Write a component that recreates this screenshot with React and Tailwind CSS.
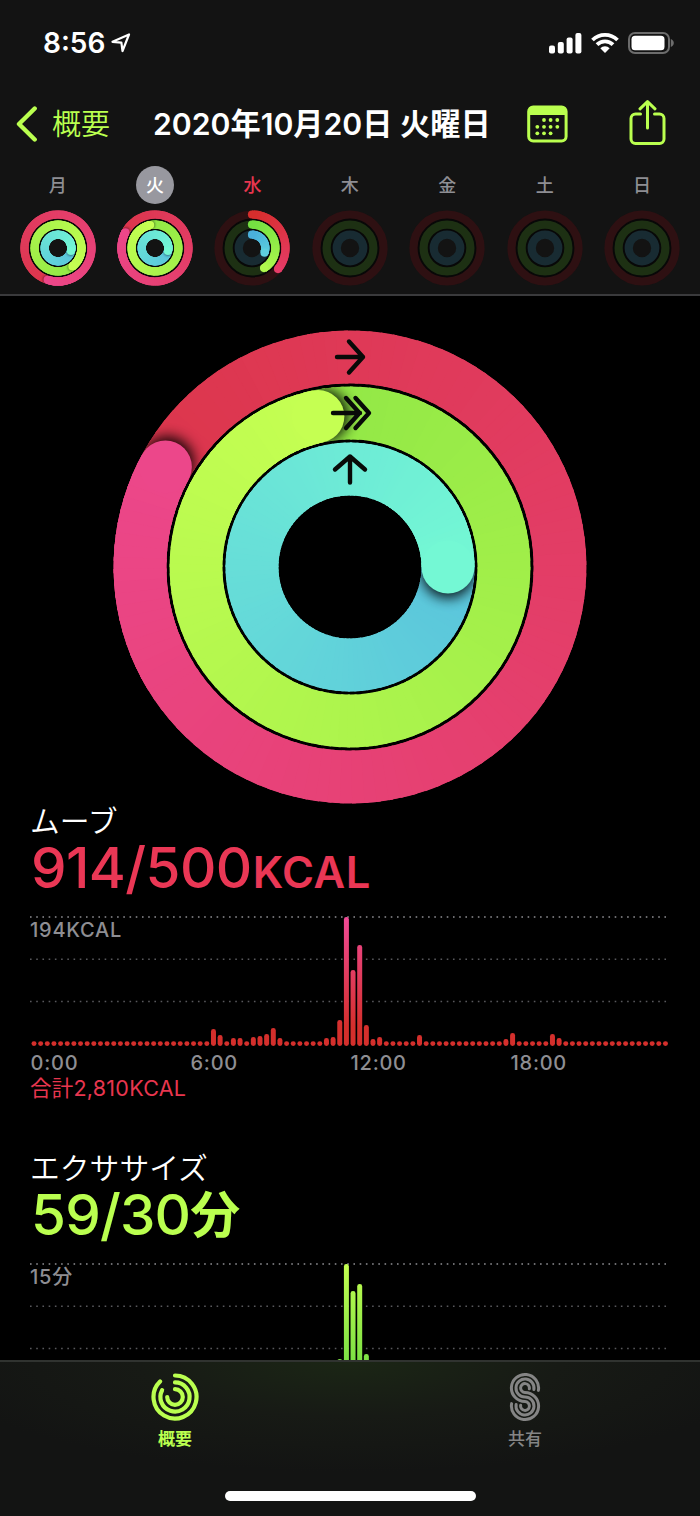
import React from "react";

const MIX = (a, b, t) =>
  `rgb(${a.map((v, i) => Math.round(v + (b[i] - v) * t)).join(",")})`;

const point = (c, r, deg) => {
  const a = (deg * Math.PI) / 180;
  return [c + r * Math.sin(a), c - r * Math.cos(a)];
};

const arc = (c, r, from, to) => {
  const [x1, y1] = point(c, r, from);
  const [x2, y2] = point(c, r, to);
  return `M${x1} ${y1}A${r} ${r} 0 ${to - from > 180 ? 1 : 0} 1 ${x2} ${y2}`;
};

const STEP = 3;

function Segments({ c, r, w, from, to, colorAt }) {
  const parts = [];
  // each piece runs under the next one so that no seam shows between them
  const overlap = Math.max(1, 100 / r);
  for (let a = from; a < to; a += STEP) {
    const end = Math.min(a + STEP, to);
    parts.push(
      <path
        key={a}
        d={arc(c, r, a, Math.min(end + overlap, to))}
        stroke={colorAt((a + end) / 2)}
        strokeWidth={w}
        fill="none"
      />
    );
  }
  return <>{parts.reverse()}</>;
}

// One ring. Laps over 360 degrees overlap their own tail with a soft shadow.
function Ring({ id, c, r, w, end, from, to, track }) {
  const full = end >= 360;
  const start = full ? end - 360 : 0;
  const colorAt = (a) =>
    MIX(from, to, Math.max(0, Math.min(1, (a - start) / (end - start || 1))));
  const [ex, ey] = point(c, r, end);
  const [sx, sy] = point(c, r, end + (w / r) * 5);
  const [hx, hy] = point(c, r, 0);

  if (!end) return <circle cx={c} cy={c} r={r} fill="none" stroke={track} strokeWidth={w} />;

  return (
    <g>
      {!full && <circle cx={c} cy={c} r={r} fill="none" stroke={track} strokeWidth={w} />}
      {!full && <circle cx={hx} cy={hy} r={w / 2} fill={colorAt(0)} />}
      {full && <circle cx={c} cy={c} r={r} fill="none" stroke={colorAt((start + end) / 2)} strokeWidth={w - 0.6} />}
      <Segments c={c} r={r} w={w} from={start} to={end} colorAt={colorAt} />
      {full && (
        <>
          <mask id={`${id}-mask`} maskUnits="userSpaceOnUse" x="0" y="0" width={c * 2} height={c * 2}>
            <circle cx={c} cy={c} r={r} fill="none" stroke="white" strokeWidth={w} />
          </mask>
          <filter id={`${id}-blur`} x="-60%" y="-60%" width="220%" height="220%">
            <feGaussianBlur stdDeviation={w * 0.12} />
          </filter>
          <g mask={`url(#${id}-mask)`}>
            <circle
              cx={sx}
              cy={sy}
              r={w / 2}
              fill="black"
              opacity={w > 20 ? 0.9 : 0.45}
              filter={`url(#${id}-blur)`}
            />
          </g>
          <Segments c={c} r={r} w={w} from={end - 60} to={end} colorAt={colorAt} />
        </>
      )}
      <circle cx={ex} cy={ey} r={w / 2} fill={colorAt(end)} />
    </g>
  );
}

const RED = [[220, 54, 76], [236, 71, 138]];
const GREEN = [[146, 232, 70], [197, 255, 82]];
const CYAN = [[90, 196, 220], [116, 248, 212]];

const DAYS = [
  { day: "月", move: 558, exercise: 502, stand: 463 },
  { day: "火", move: 658, exercise: 708, stand: 463, selected: true },
  { day: "水", move: 129, exercise: 149, stand: 110, today: true },
  { day: "木", move: 0, exercise: 0, stand: 0 },
  { day: "金", move: 0, exercise: 0, stand: 0 },
  { day: "土", move: 0, exercise: 0, stand: 0 },
  { day: "日", move: 0, exercise: 0, stand: 0 },
];

function SmallRings({ id, move, exercise, stand, today }) {
  return (
    <svg width="76" height="76" viewBox="0 0 76 76" className="block">
      <circle cx="38" cy="38" r="23" fill="none" stroke="#080808" strokeWidth="24" />
      <Ring id={`${id}-m`} c={38} r={33.5} w={8.2} end={move}
        from={today ? [214, 46, 44] : RED[0]} to={today ? [230, 60, 104] : RED[1]} track="#2e1012" />
      <Ring id={`${id}-e`} c={38} r={23.4} w={8.2} end={exercise}
        from={today ? [116, 224, 66] : GREEN[0]} to={today ? [176, 248, 78] : GREEN[1]} track="#1d3013" />
      <Ring id={`${id}-s`} c={38} r={13.3} w={8.2} end={stand}
        from={today ? [74, 176, 220] : CYAN[0]} to={today ? [94, 208, 222] : CYAN[1]} track="#182b32" />
    </svg>
  );
}

function StatusBar() {
  return (
    <div className="flex h-[86px] items-center justify-between pl-[43px] pr-[25px]">
      <div className="flex items-center gap-[6px]">
        <span className="text-[28px] font-semibold leading-none">8:56</span>
        <svg width="20" height="20" viewBox="0 0 20 20" fill="none" stroke="white" strokeWidth="2.2" strokeLinejoin="round">
          <path d="M1.500 8.800 18 1.500 11.500 18 10.400 9.600Z" />
        </svg>
      </div>
      <div className="flex items-center gap-[9px]">
        <svg width="33" height="22" viewBox="0 0 33 22" fill="white">
          <rect x="0" y="13.500" width="6" height="8" rx="2" />
          <rect x="8.800" y="10" width="6" height="11.500" rx="2" />
          <rect x="17.600" y="5.500" width="6" height="16" rx="2" />
          <rect x="26.400" y="1" width="6" height="20.500" rx="2" />
        </svg>
        <svg width="28" height="22" viewBox="0 0 28 22" fill="none" stroke="white" strokeWidth="3.800">
          <path d="M1.500 8a17.800 17.800 0 0 1 25 0" />
          <path d="M6 12.700a11.300 11.300 0 0 1 16 0" />
          <path d="M9.300 16.300a6.700 6.700 0 0 1 9.400 0L14 21Z" fill="white" stroke="none" />
        </svg>
        <svg width="47" height="22" viewBox="0 0 47 22">
          <rect x="1" y="1" width="40" height="20" rx="6" fill="none" stroke="#6c6c6c" strokeWidth="2" />
          <rect x="3.500" y="3.800" width="33" height="14.500" rx="3.500" fill="white" />
          <path d="M42.800 7v8c4-1.600 4-6.400 0-8Z" fill="#6c6c6c" />
        </svg>
      </div>
    </div>
  );
}

function CalendarIcon() {
  const dots = [[17, 15], [23.6, 15], [30.3, 15], [10.3, 21.8], [17, 21.8], [23.6, 21.8], [30.3, 21.8], [10.3, 28.3], [17, 28.3], [23.6, 28.3]];
  return (
    <svg width="41" height="38" viewBox="0 0 41 38" className="mt-px">
      <rect x="1.700" y="2" width="37.400" height="34" rx="4.500" fill="none" stroke="#baff4f" strokeWidth="3" />
      <path d="M2 10V5.500a4 4 0 0 1 4-4h29a4 4 0 0 1 4 4V10Z" fill="#baff4f" />
      {dots.map(([x, y]) => (
        <circle key={`${x}-${y}`} cx={x} cy={y} r="1.900" fill="#baff4f" />
      ))}
    </svg>
  );
}

function ShareIcon() {
  return (
    <svg width="38" height="46" viewBox="0 0 38 46" fill="none" stroke="#baff4f" strokeWidth="3" strokeLinecap="round" strokeLinejoin="round">
      <path d="M12.500 14H7.500a4.500 4.500 0 0 0-4.500 4.500v20.500A4.500 4.500 0 0 0 7.500 43.500h24a4.500 4.500 0 0 0 4.500-4.500V18.500a4.500 4.500 0 0 0-4.500-4.500h-5" />
      <path d="M19.500 28V2.500M12 8.800 19.500 1.700 27 8.800" />
    </svg>
  );
}

function Header() {
  return (
    <header className="h-[296px] border-b-2 border-[#3a3a3c] bg-[#131313]">
      <StatusBar />
      <div className="flex h-[74px] items-center pl-4 text-[30px]">
        <div className="flex w-[137px] items-center gap-[14px] pt-px text-[#baff4f]">
          <svg width="22" height="36" viewBox="0 0 22 36" fill="none" stroke="currentColor" strokeWidth="4.400" strokeLinecap="round" strokeLinejoin="round">
            <path d="M18.700 2.500 3 18l15.700 15.500" />
          </svg>
          <span className="pt-px text-[29px] font-[350] leading-none">概要</span>
        </div>
        <h1 className="w-[374px] whitespace-nowrap pt-[2px] text-[30.200px] font-semibold leading-none">2020年10月20日 火曜日</h1>
        <CalendarIcon />
        <div className="ml-[60px]">
          <ShareIcon />
        </div>
      </div>
      <div className="flex pl-[9px]">
        {DAYS.map((d, i) => (
          <div key={d.day} className="flex w-[97.400px] shrink-0 flex-col items-center">
            <div
              className={
                "mt-[6px] flex h-[38px] w-[38px] items-center justify-center rounded-full pt-[2px] text-[18px] font-medium leading-none " +
                (d.selected ? "bg-[#98989f] text-white" : d.today ? "text-[#e8364f]" : "text-[#8e8e93]")
              }
            >
              {d.day}
            </div>
            <div className="mt-[6px]">
              <SmallRings id={`day${i}`} {...d} />
            </div>
          </div>
        ))}
      </div>
    </header>
  );
}

function BigRings() {
  return (
    <svg width="476" height="476" viewBox="0 0 476 476" className="mx-auto block">
      <Ring id="move" c={238} r={210} w={52.8} end={658.5} from={RED[0]} to={RED[1]} />
      <Ring id="exercise" c={238} r={154} w={52.8} end={708} from={GREEN[0]} to={GREEN[1]} />
      <Ring id="stand" c={238} r={98} w={53} end={450} from={CYAN[0]} to={CYAN[1]} />
      <g fill="none" stroke="#080a08" strokeWidth="4.400" strokeLinecap="round" strokeLinejoin="round">
        <path d="M225 28h26M237 12.500 251 28l-14 15.500" />
        <path d="M221 84h27M234 69l13.500 15-13.500 15M243.500 69l13.500 15-13.500 15" />
        <path d="M238 153.500v-26M223 140.500l15-13 15 13" />
      </g>
    </svg>
  );
}

const moveBars = Array(96).fill(4);
Object.assign(moveBars, {
  27: 17, 28: 11, 30: 8, 31: 8, 33: 9, 34: 10, 35: 12, 36: 18, 37: 8,
  44: 8, 45: 9, 46: 26, 47: 129, 48: 76, 49: 101, 50: 21, 51: 7, 52: 9,
  58: 11, 71: 7, 72: 13, 78: 12, 79: 8,
});

const exerciseBars = Array(96).fill(4);
Object.assign(exerciseBars, { 46: 34, 47: 129, 48: 102, 49: 109, 50: 39 });

function Chart({ id, bars, top, bottom, label }) {
  return (
    <div className="relative ml-[30px] w-[640px]">
      <svg width="640" height="131" viewBox="0 0 640 131" className="block">
        <linearGradient id={id} gradientUnits="userSpaceOnUse" x1="0" y1="1" x2="0" y2="130">
          <stop offset="0" stopColor={top} />
          <stop offset="0.85" stopColor={bottom} />
        </linearGradient>
        <path d="M0 1H637" stroke="#8e8e93" strokeWidth="1.600" strokeDasharray="1.600 4.620" />
        <path d="M0 43.300H637M0 85.500H637" stroke="#58585c" strokeWidth="1.400" strokeDasharray="1.600 4.620" />
        {bars.map((h, i) => (
          <rect key={i} x={1.5 + i * 6.647} y={130 - Math.max(h, 4.8)} width="5" height={Math.max(h, 4.8)} rx="2.400" fill={`url(#${id})`} />
        ))}
      </svg>
      <span className="absolute left-0 top-[4px] text-[20px] font-medium leading-[20px] tracking-[0.750px] text-[#8e8e93]">{label}</span>
    </div>
  );
}

// Three parallel lines: top bowl radius r, bottom bowl radius 18 - r
function SharingIcon() {
  return (
    <svg width="32" height="50" viewBox="0 0 32 50" fill="none" stroke="currentColor" strokeWidth="3" strokeLinecap="round">
      {[13.6, 9, 4.4].map((r) => {
        const r2 = 18 - r;
        const [x1, y1] = point(16, r, 100);
        const [x2, y2] = point(16, r2, 280);
        return (
          <path
            key={r}
            d={`M${x1} ${y1}A${r} ${r} 0 1 0 16 ${16 + r}A${r2} ${r2} 0 1 1 ${x2} ${y2 + 18}`}
          />
        );
      })}
    </svg>
  );
}

function TabBar() {
  return (
    <nav className="absolute inset-x-0 bottom-0 h-[156px] border-t-2 border-[#303330] bg-[#131413] bg-[radial-gradient(ellipse_420px_110px_at_50%_0%,#1b2615,#171a15_50%,#131413)]">
      <div className="flex pt-[10px] text-[17px] font-bold leading-none">
        <div className="flex w-1/2 flex-col items-center gap-[9px] text-[#baff4f]">
          <svg width="50" height="50" viewBox="0 0 50 50" fill="none" stroke="currentColor" strokeWidth="4.200" strokeLinecap="round">
            <path d={arc(25, 21.5, 0, 316)} />
            <path d={arc(25, 14.6, 0, 298)} />
            <path d={arc(25, 7.8, 0, 270)} />
          </svg>
          概要
        </div>
        <div className="flex w-1/2 flex-col items-center gap-[9px] text-[#858585]">
          <SharingIcon />
          <span className="font-medium">共有</span>
        </div>
      </div>
      <div className="absolute bottom-[15px] left-[225px] h-[10px] w-[251px] rounded-full bg-white" />
    </nav>
  );
}

export default function App() {
  return (
    <div className="relative h-[1516px] w-[700px] overflow-hidden bg-black font-['Inter','Noto_Sans_CJK_JP',sans-serif] text-white">
      <Header />
      <main className="pt-[33px]">
        <BigRings />
        <section>
          <h2 className="ml-[30px] mt-px text-[29.800px] font-[350] leading-[30px]">ムーブ</h2>
          <p className="ml-[31px] mt-[3px] h-[58px] whitespace-nowrap text-[56.500px] font-medium leading-[58px] tracking-[-0.6px] text-[#ea3755]">
            914/500<span className="ml-px text-[43.500px] font-semibold tracking-[0.5px]">KCAL</span>
          </p>
          <div className="mt-[19px]">
            <Chart id="move-bars" bars={moveBars} top="#f04a96" bottom="#d42f2c" label="194KCAL" />
          </div>
          <div className="ml-[30.500px] mt-[6px] flex text-[20px] font-medium leading-[20px] tracking-[0.750px] text-[#8e8e93]">
            <span className="w-[160px]">0:00</span>
            <span className="w-[160px]">6:00</span>
            <span className="w-[160px]">12:00</span>
            <span>18:00</span>
          </div>
          <p className="ml-[30px] mt-[4px] text-[21.500px] leading-[22px] tracking-[0.250px] text-[#e8364f]">合計2,810KCAL</p>
        </section>
        <section className="mt-[54px]">
          <h2 className="ml-[30px] text-[29.800px] font-[350] leading-[30px]">エクササイズ</h2>
          <p className="ml-[31px] mt-[3px] h-[58px] whitespace-nowrap text-[56.500px] font-medium leading-[58px] tracking-[-0.8px] text-[#baff4f]">
            59/30<span className="relative -top-[2px] text-[50px] font-bold">分</span>
          </p>
          <div className="mt-[19px]">
            <Chart id="exercise-bars" bars={exerciseBars} top="#c4ff50" bottom="#72dc42" label="15分" />
          </div>
        </section>
      </main>
      <TabBar />
    </div>
  );
}
